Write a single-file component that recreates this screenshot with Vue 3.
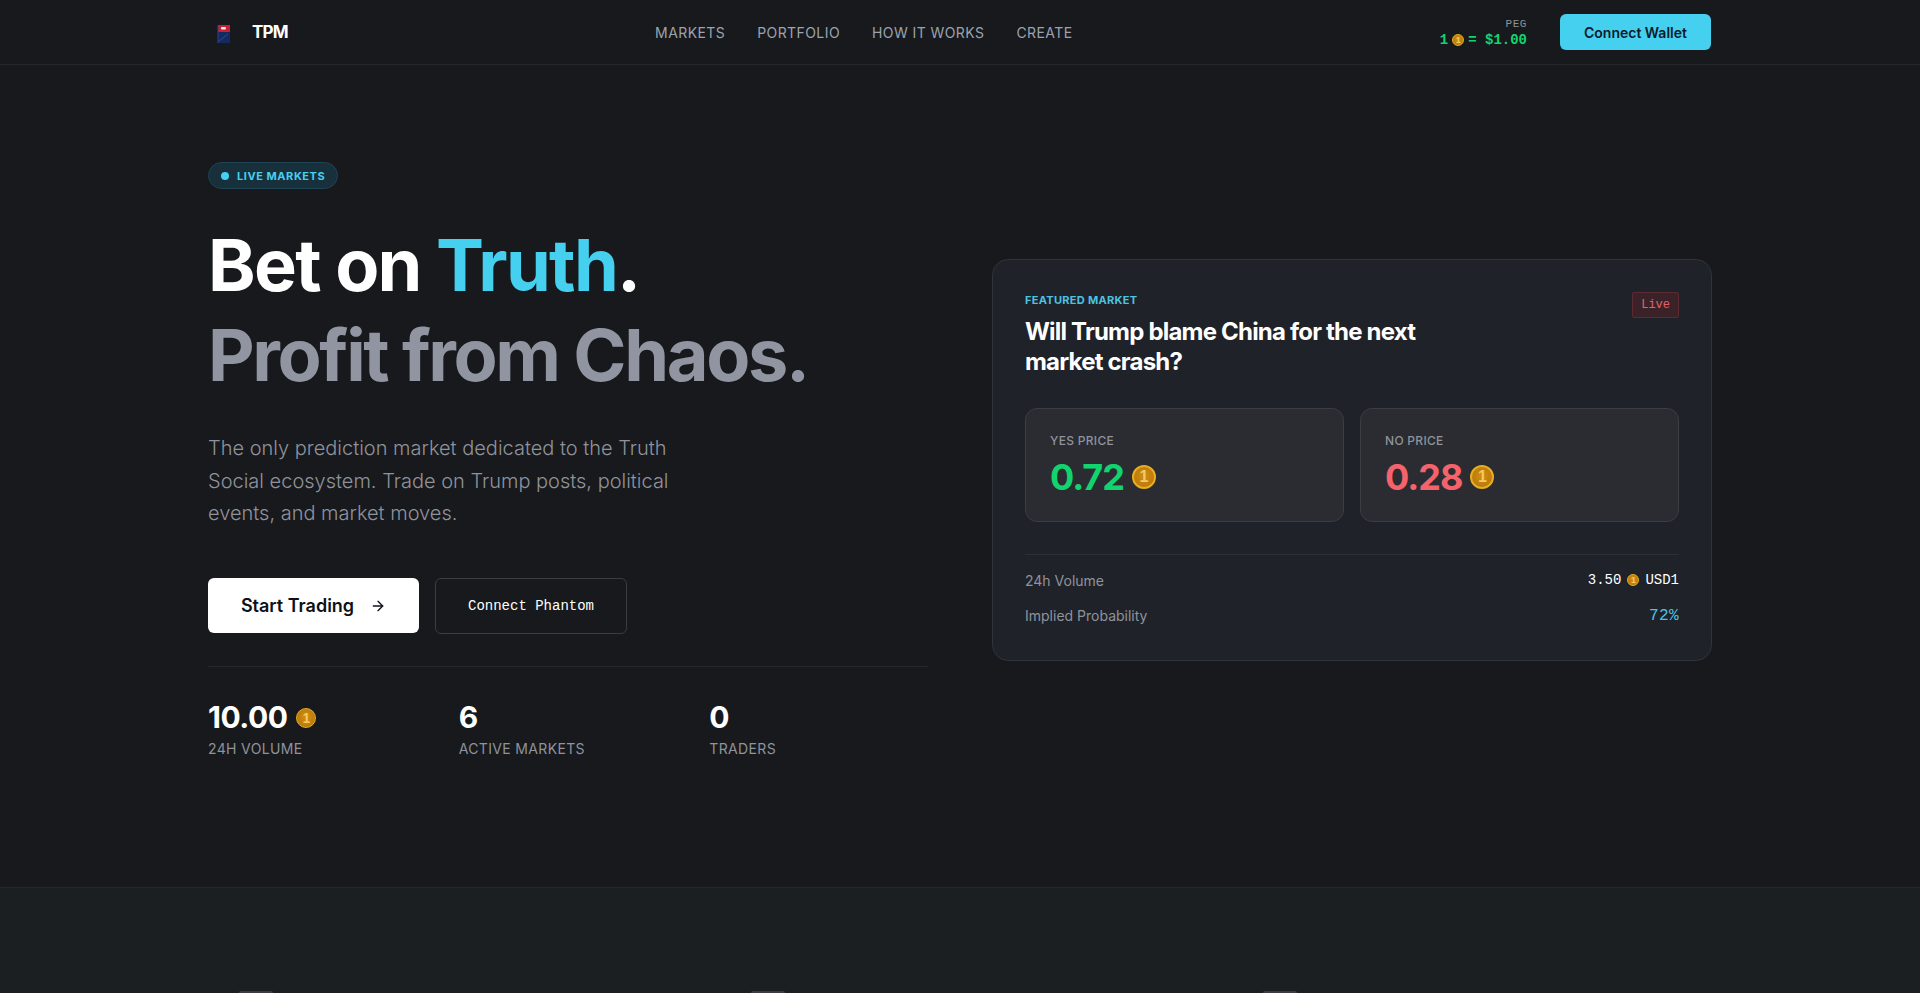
<template>
  <div class="page">
    <header class="nav">
      <div class="nav__inner">
        <a class="brand">
          <span class="brand__mark">
            <svg width="32" height="32" viewBox="0 0 32 32" aria-hidden="true">
              <rect x="10" y="9" width="12" height="7" fill="#c8202f" />
              <rect x="10" y="16" width="12" height="11" fill="#14295f" />
              <rect x="9.5" y="9" width="1" height="18" fill="#2b4688" />
              <rect x="13" y="11" width="5" height="2.4" rx="1" fill="#ffe9e9" />
              <path d="M11 25l9-7" stroke="#35548f" stroke-width="0.8" />
            </svg>
          </span>
          <span class="brand__name">TPM</span>
        </a>
        <nav class="nav__links">
          <a v-for="link in links" :key="link">{{ link }}</a>
        </nav>
        <div class="nav__right">
          <div class="peg">
            <span class="peg__label">PEG</span>
            <span class="peg__value">1 <i class="coin coin--12"></i> = $1.00</span>
          </div>
          <button type="button" class="btn-wallet">Connect Wallet</button>
        </div>
      </div>
    </header>

    <section class="hero">
      <div class="hero__grid">
        <div class="hero__left">
          <div class="pill"><span class="pill__dot"></span>LIVE MARKETS</div>
          <h1 class="headline">
            <span class="headline__top">Bet on <em>Truth</em>.</span>
            <span class="headline__muted">Profit from Chaos.</span>
          </h1>
          <p class="lead">
            The only prediction market dedicated to the Truth Social ecosystem. Trade on Trump
            posts, political events, and market moves.
          </p>
          <div class="actions">
            <button type="button" class="btn-primary">
              Start Trading
              <svg width="16" height="16" viewBox="0 0 24 24" fill="none" stroke="currentColor" stroke-width="2"
                stroke-linecap="round" stroke-linejoin="round" aria-hidden="true">
                <path d="M5 12h14" />
                <path d="M12 5l7 7-7 7" />
              </svg>
            </button>
            <button type="button" class="btn-outline">Connect Phantom</button>
          </div>
          <div class="stats">
            <div v-for="stat in stats" :key="stat.label">
              <div class="stats__value">{{ stat.value }}<i v-if="stat.coin" class="coin coin--20"></i></div>
              <div class="stats__label">{{ stat.label }}</div>
            </div>
          </div>
        </div>

        <aside class="card">
          <div class="card__head">
            <div>
              <div class="card__eyebrow">FEATURED MARKET</div>
              <h2 class="card__title">Will Trump blame China for the next market crash?</h2>
            </div>
            <span class="live">Live</span>
          </div>
          <div class="prices">
            <div v-for="price in prices" :key="price.label" class="price">
              <div class="price__label">{{ price.label }}</div>
              <div class="price__value" :class="price.tone">{{ price.value }}<i class="coin coin--24"></i></div>
            </div>
          </div>
          <div class="rows">
            <div class="row">
              <span>24h Volume</span>
              <span class="row__mono">3.50 <i class="coin coin--12"></i> USD1</span>
            </div>
            <div class="row">
              <span>Implied Probability</span>
              <span class="row__prob">72%</span>
            </div>
          </div>
        </aside>
      </div>
    </section>

    <section class="next">
      <div class="next__grid">
        <span v-for="n in 3" :key="n" class="next__icon"></span>
      </div>
    </section>
  </div>
</template>

<script setup>
const links = ['MARKETS', 'PORTFOLIO', 'HOW IT WORKS', 'CREATE']

const stats = [
  { value: '10.00', label: '24H VOLUME', coin: true },
  { value: '6', label: 'ACTIVE MARKETS' },
  { value: '0', label: 'TRADERS' }
]

const prices = [
  { label: 'YES PRICE', value: '0.72', tone: 'is-yes' },
  { label: 'NO PRICE', value: '0.28', tone: 'is-no' }
]
</script>

<style>
html,
body {
  margin: 0;
  background: #17191d;
}
</style>

<style scoped>
.page {
  height: 993px;
  overflow: hidden;
  background: #17191d;
  color: #fff;
  font-family: Inter, "Liberation Sans", sans-serif;
}

.nav {
  height: 64px;
  border-bottom: 1px solid #24272c;
}

.nav__inner {
  display: flex;
  justify-content: space-between;
  align-items: center;
  max-width: 1504px;
  height: 64px;
  margin: 0 auto;
}

.brand {
  display: flex;
  align-items: center;
  gap: 12px;
}

.brand__mark {
  display: block;
  width: 32px;
  height: 32px;
}

.brand__name {
  font-size: 17px;
  font-weight: 700;
  letter-spacing: -0.8px;
}

.nav__links {
  display: flex;
  gap: 32px;
  font-size: 14px;
  font-weight: 400;
  letter-spacing: 0.42px;
  color: #9ca3af;
}

.nav__right {
  display: flex;
  align-items: center;
  gap: 33px;
  margin-right: 1px;
}

.peg {
  display: flex;
  flex-direction: column;
  align-items: flex-end;
  padding-top: 2px;
  font-family: "Liberation Mono", monospace;
}

.peg__label {
  font-size: 11px;
  line-height: 14px;
  letter-spacing: 0.55px;
  color: #8f939b;
}

.peg__value {
  display: flex;
  align-items: center;
  gap: 4px;
  font-size: 14px;
  font-weight: 700;
  line-height: 18px;
  color: #12d46f;
}

.btn-wallet {
  width: 151px;
  height: 36px;
  border: 0;
  border-radius: 6px;
  background: #45d0ef;
  color: #0d1a2b;
  font: 600 14px Inter, sans-serif;
}

.coin {
  display: inline-flex;
  align-items: center;
  justify-content: center;
  box-sizing: border-box;
  flex: none;
  border: 1px solid #e8ad20;
  border-radius: 50%;
  background: radial-gradient(circle at 50% 45%, #cf8f14, #b47208);
  color: #f5c95f;
  font-family: "Liberation Sans", sans-serif;
  font-style: normal;
  font-weight: 700;
  letter-spacing: 0;
  vertical-align: middle;
}

.coin::after {
  content: "1";
}

.coin--12 {
  width: 12px;
  height: 12px;
  font-size: 9px;
  line-height: 1;
}

.coin--20 {
  width: 20px;
  height: 20px;
  margin: 2px 0 0 9px;
  font-size: 14px;
  line-height: 1;
}

.coin--24 {
  width: 24px;
  height: 24px;
  margin-left: 8px;
  border-width: 2px;
  font-size: 16px;
  line-height: 1;
}

.hero {
  height: 822px;
  border-bottom: 1px solid #24272c;
}

.hero__grid {
  display: grid;
  grid-template-columns: 1fr 1fr;
  gap: 64px;
  max-width: 1504px;
  margin: 0 auto;
}

.hero__left {
  padding-top: 97px;
}

.pill {
  display: inline-flex;
  align-items: center;
  gap: 8px;
  height: 25px;
  padding: 0 12px;
  border: 1px solid #1f4454;
  border-radius: 999px;
  background: #17303c;
  color: #45d0ef;
  font-size: 11px;
  font-weight: 700;
  letter-spacing: 0.55px;
}

.pill__dot {
  width: 8px;
  height: 8px;
  border-radius: 50%;
  background: #45d0ef;
}

.headline {
  display: flex;
  flex-direction: column;
  margin: 31px 0 0;
  font-size: 72px;
  font-weight: 700;
  line-height: 90px;
}

.headline__top {
  letter-spacing: -1.7px;
}

.headline em {
  font-style: normal;
  color: #45d0ef;
}

.headline__muted {
  color: #9095a1;
  letter-spacing: -2.36px;
}

.lead {
  max-width: 480px;
  margin: 32px 0 0;
  color: #8f939b;
  font-size: 20px;
  font-weight: 300;
  line-height: 32.5px;
}

.actions {
  display: flex;
  align-items: center;
  gap: 16px;
  margin-top: 48px;
}

.btn-primary {
  display: inline-flex;
  align-items: center;
  justify-content: center;
  gap: 16px;
  width: 211px;
  height: 55px;
  border: 0;
  border-radius: 6px;
  background: #fff;
  color: #0d1117;
  font: 600 18px Inter, sans-serif;
}

.btn-outline {
  width: 192px;
  height: 56px;
  border: 1px solid #3a3d43;
  border-radius: 6px;
  background: transparent;
  color: #fff;
  font: 14px "Liberation Mono", monospace;
}

.stats {
  display: grid;
  grid-template-columns: repeat(3, 1fr);
  gap: 32px;
  margin-top: 32px;
  padding-top: 32px;
  border-top: 1px solid #24272c;
}

.stats__value {
  display: flex;
  align-items: center;
  font-size: 30px;
  font-weight: 700;
  line-height: 36px;
  letter-spacing: -0.5px;
}

.stats__label {
  margin-top: 4px;
  color: #8f939b;
  font-size: 14px;
  font-weight: 400;
  line-height: 20px;
  letter-spacing: 0.35px;
}

.card {
  align-self: start;
  box-sizing: border-box;
  height: 402px;
  margin-top: 194px;
  padding: 32px;
  border: 1px solid #2f333a;
  border-radius: 16px;
  background: #1f2229;
}

.card__head {
  display: flex;
  justify-content: space-between;
  align-items: flex-start;
}

.card__eyebrow {
  color: #4cc3e0;
  font-size: 11px;
  font-weight: 700;
  line-height: 16px;
  letter-spacing: 0.3px;
}

.card__title {
  max-width: 420px;
  margin: 9px 0 0;
  font-size: 24px;
  font-weight: 700;
  line-height: 30px;
  letter-spacing: -0.8px;
}

.live {
  padding: 4px 8px;
  border: 1px solid #5c2a30;
  border-radius: 2px;
  background: #3b2228;
  color: #e0626c;
  font: 12px/16px "Liberation Mono", monospace;
}

.prices {
  display: grid;
  grid-template-columns: 1fr 1fr;
  gap: 16px;
  margin-top: 31px;
}

.price {
  height: 114px;
  box-sizing: border-box;
  padding: 24px;
  border: 1px solid #3a3d43;
  border-radius: 12px;
  background: #2a2c31;
}

.price__label {
  color: #8f939b;
  font-size: 12px;
  font-weight: 500;
  line-height: 16px;
  letter-spacing: 0.3px;
}

.price__value {
  display: flex;
  align-items: center;
  margin-top: 8px;
  font-size: 36px;
  font-weight: 700;
  line-height: 40px;
  letter-spacing: -1px;
}

.is-yes {
  color: #12d46f;
}

.is-no {
  color: #f4636c;
}

.rows {
  margin-top: 32px;
  padding-top: 15px;
  border-top: 1px solid #2b2f36;
}

.row {
  display: flex;
  justify-content: space-between;
  align-items: center;
  height: 20px;
  margin-bottom: 15.5px;
  color: #8f939b;
  font-size: 14px;
}

.row__mono {
  display: flex;
  align-items: center;
  gap: 6px;
  color: #fff;
  font-family: "Liberation Mono", monospace;
}

.row__prob {
  color: #4cc3e0;
  font-family: "Liberation Mono", monospace;
  font-size: 16px;
  letter-spacing: 0.4px;
}

.next {
  height: 107px;
  background: #1c1f22;
}

.next__grid {
  display: grid;
  grid-template-columns: repeat(3, 1fr);
  gap: 32px;
  max-width: 1504px;
  margin: 0 auto;
}

.next__icon {
  width: 34px;
  height: 2px;
  margin: 103px 0 0 31px;
  border-radius: 2px 2px 0 0;
  background: #3a3d43;
}
</style>
